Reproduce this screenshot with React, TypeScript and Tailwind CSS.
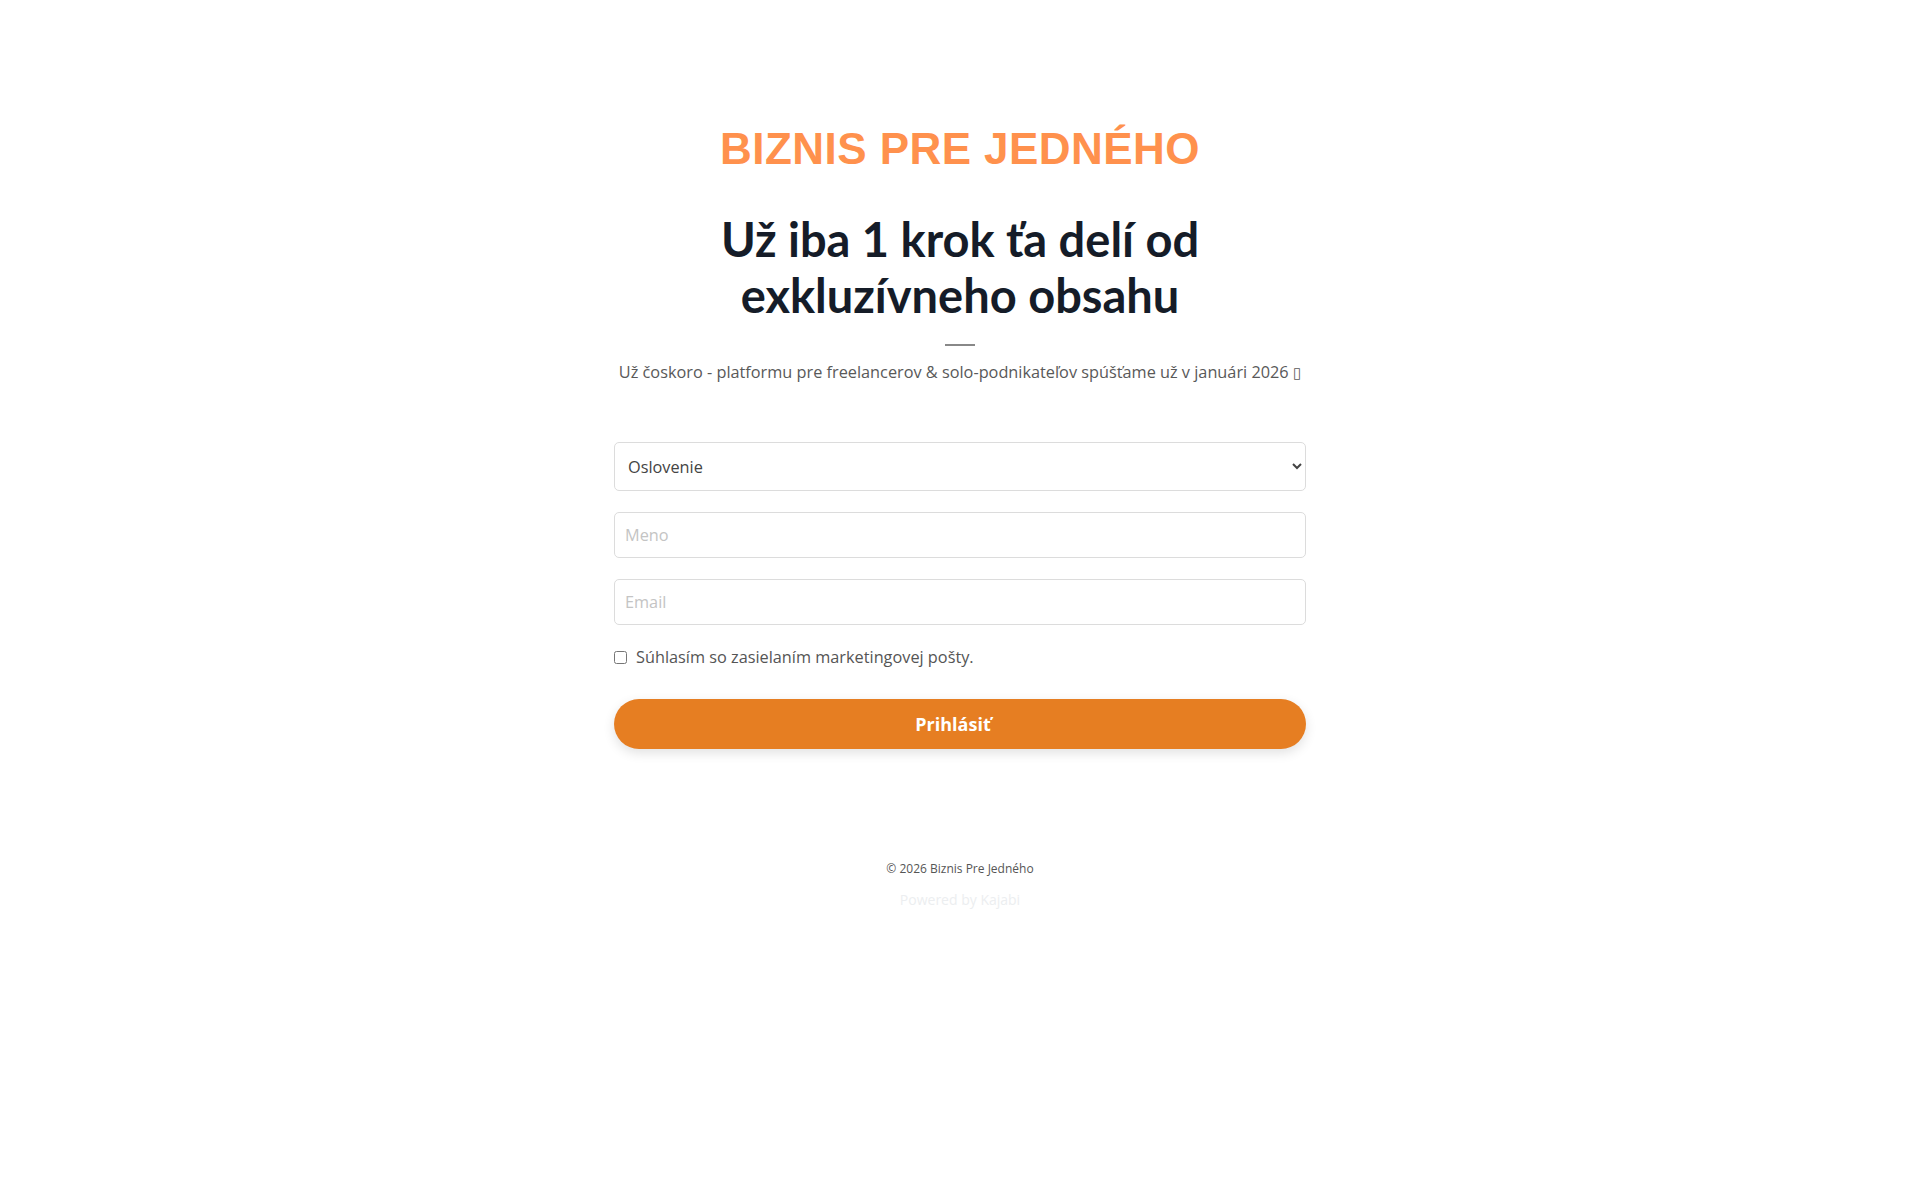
import React, { useState } from 'react';

const App: React.FC = () => {
    const [agree, setAgree] = useState(false);

    return (
        <div className="min-h-screen bg-white font-['Open_Sans',sans-serif] text-[#555]">
            <main className="mx-auto flex w-[692px] flex-col items-center pt-[124px]">
                <h1 className="font-['Liberation_Sans',sans-serif] text-[44px] leading-[50px] font-bold tracking-[0.01em] text-[#ff914d]">
                    BIZNIS PRE JEDNÉHO
                </h1>

                <h2 className="mt-[37px] text-center font-['Lato',sans-serif] text-[47px] leading-[56px] font-bold text-[#151c28]">
                    Už iba 1 krok ťa delí od
                    <br />
                    exkluzívneho obsahu
                </h2>

                <div className="mt-[21px] h-[2px] w-[30px] bg-[#888]" />

                <p className="mt-[14px] text-center text-[16.3px] leading-[24px] text-[#595959]">
                    Už čoskoro - platformu pre freelancerov &amp; solo-podnikateľov spúšťame už v januári 2026{' '}
                    <span className="font-['DejaVu_Sans',sans-serif] text-[15px]">▯</span>
                </p>

                <form className="mt-[57px] flex w-full flex-col" onSubmit={(e) => e.preventDefault()}>
                    <select
                        defaultValue=""
                        className="h-[49px] w-full rounded-[5px] border border-[#dcdcdc] bg-white pl-[9px] pr-[8px] text-[16.3px] text-[#444]"
                    >
                        <option value="">Oslovenie</option>
                        <option value="pan">Pán</option>
                        <option value="pani">Pani</option>
                    </select>

                    <input
                        type="text"
                        placeholder="Meno"
                        className="mt-[21px] h-[46px] w-full rounded-[5px] border border-[#dcdcdc] px-[10px] text-[16.3px] text-[#333] placeholder:text-[#c4c4c4]"
                    />

                    <input
                        type="email"
                        placeholder="Email"
                        className="mt-[21px] h-[46px] w-full rounded-[5px] border border-[#dcdcdc] px-[10px] text-[16.3px] text-[#333] placeholder:text-[#c4c4c4]"
                    />

                    <label className="mt-[20px] flex items-center gap-[9px] text-[16.3px] text-[#555]">
                        <input
                            type="checkbox"
                            checked={agree}
                            onChange={(e) => setAgree(e.target.checked)}
                            className="h-[13px] w-[13px]"
                        />
                        Súhlasím so zasielaním marketingovej pošty.
                    </label>

                    <button
                        type="submit"
                        className="mt-[30px] h-[50px] w-full rounded-full bg-[#e67e22] pr-[14px] text-[18px] font-bold text-white shadow-[0_4px_12px_rgba(0,0,0,0.12)]"
                    >
                        Prihlásiť
                    </button>
                </form>
            </main>

            <footer className="mt-[110px] flex flex-col items-center">
                <p className="text-[12px] leading-[20px] text-[#555]">© 2026 Biznis Pre Jedného</p>
                <p className="mt-[11px] text-[14px] leading-[20px] text-[#eceef0]">Powered by Kajabi</p>
            </footer>
        </div>
    );
};

export default App;
